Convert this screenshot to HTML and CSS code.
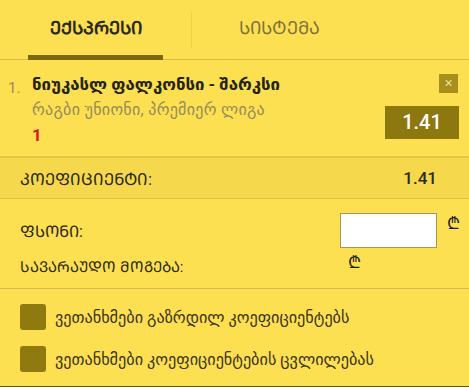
FILE: index.html
```html
<!DOCTYPE html>
<html lang="ka">
<head>
    <meta charset="UTF-8">
    <title>ბილეთი</title>
    <link rel="stylesheet" href="styles.css">
</head>
<body>
    <div class="kupon">
        <div class="tabebi">
            <div class="tabi aktiuri">ᲔᲥᲡᲞᲠᲔᲡᲘ</div>
            <div class="gamyofi"></div>
            <div class="tabi">ᲡᲘᲡᲢᲔᲛᲐ</div>
        </div>

        <div class="movlena">
            <div class="nomeri">1.</div>
            <div class="info">
                <div class="satauri">ნიუკასლ ფალკონსი - შარკსი</div>
                <div class="liga">რაგბი უნიონი, პრემიერ ლიგა</div>
                <div class="shedegi">1</div>
            </div>
            <div class="marjvena">
                <button class="dakhurva">×</button>
                <div class="koef-yuti">1.41</div>
            </div>
        </div>

        <div class="koef-rigi">
            <span class="etiketi">ᲙᲝᲔᲤᲘᲪᲘᲔᲜᲢᲘ:</span>
            <span class="koef-mnishvneloba">1.41</span>
        </div>

        <div class="fsoni">
            <div class="fsoni-rigi">
                <span class="etiketi">ᲤᲡᲝᲜᲘ:</span>
                <input type="text" class="tankha">
                <span class="lari">₾</span>
            </div>
            <div class="mogeba-rigi">
                <span class="etiketi">ᲡᲐᲕᲐᲠᲐᲣᲓᲝ ᲛᲝᲒᲔᲑᲐ:</span>
                <span class="lari">₾</span>
            </div>
        </div>

        <div class="tankhmoba">
            <label class="monishvna"><span class="yuti"></span>ვეთანხმები გაზრდილ კოეფიციენტებს</label>
            <label class="monishvna"><span class="yuti"></span>ვეთანხმები კოეფიციენტების ცვლილებას</label>
        </div>
    </div>
</body>
</html>
```

FILE: styles.css
```css
body {
    margin: 0;
    font-family: Roboto, "DejaVu Sans", sans-serif;
    background-color: #fddf52;
}
.kupon {
    width: 469px;
    height: 387px;
    background-color: #fddf52;
    color: #2b2a1c;
    border-bottom: 1px solid #55503a;
    box-sizing: border-box;
}
.tabebi {
    display: flex;
    align-items: center;
    height: 60px;
    border-bottom: 1px solid #d8bd42;
    box-sizing: border-box;
}
.tabi {
    position: relative;
    height: 100%;
    display: flex;
    align-items: center;
    justify-content: center;
    padding-bottom: 5px;
    box-sizing: border-box;
    font-size: 18px;
    color: #7f7238;
}
.tabi:first-child {
    width: 135px;
    margin-left: 28px;
}
.tabi:last-child {
    width: 150px;
    margin-left: 12px;
}
.aktiuri {
    color: #2b2a1c;
    font-weight: bold;
}
.aktiuri::after {
    content: "";
    position: absolute;
    left: 0;
    right: 0;
    bottom: -1px;
    height: 5px;
    background-color: #7a6910;
}
.gamyofi {
    width: 1px;
    height: 36px;
    margin-left: 28px;
    background-color: #ebcf4c;
}
.movlena {
    display: flex;
    height: 98px;
    padding: 14px 10px 0 8px;
    box-sizing: border-box;
    border-bottom: 2px solid #e3c646;
}
.nomeri {
    width: 24px;
    color: #958b58;
    font-size: 15px;
    padding-top: 5px;
}
.info {
    flex: 1;
}
.satauri {
    font-size: 16.8px;
    font-weight: bold;
    color: #25241a;
}
.liga {
    margin-top: 6px;
    font-size: 16px;
    letter-spacing: 0.3px;
    color: #958b58;
}
.shedegi {
    margin-top: 6px;
    font-size: 17px;
    font-weight: bold;
    color: #d61c1c;
}
.marjvena {
    display: flex;
    flex-direction: column;
    align-items: flex-end;
}
.dakhurva {
    width: 19px;
    height: 19px;
    padding: 0;
    border: none;
    background-color: #a88f1c;
    color: #f0e0a0;
    font-size: 14px;
    line-height: 19px;
    margin-right: 1px;
}
.koef-yuti {
    margin-top: 13px;
    width: 74px;
    height: 33px;
    line-height: 33px;
    text-align: center;
    background-color: #8d7810;
    color: #fff;
    font-size: 20px;
    font-weight: 500;
}
.koef-rigi {
    display: flex;
    justify-content: space-between;
    align-items: center;
    height: 40px;
    padding: 0 32px 0 20px;
    background-color: #f6d84d;
    border-bottom: 1px solid #dcc046;
}
.koef-rigi .etiketi {
    font-size: 16.5px;
}
.koef-mnishvneloba {
    font-weight: 500;
    font-size: 17px;
}
.fsoni {
    padding: 14px 0 0 20px;
    height: 90px;
    box-sizing: border-box;
    border-bottom: 1px solid #d8bd42;
}
.fsoni-rigi {
    display: flex;
    align-items: center;
}
.etiketi {
    font-size: 16px;
}
.fsoni-rigi .etiketi {
    flex: 1;
}
.tankha {
    width: 97px;
    height: 35px;
    box-sizing: border-box;
    border: 1px solid #a89858;
    background: #fff;
}
.lari {
    font-family: "DejaVu Sans", sans-serif;
    font-size: 17px;
    color: #1e1d14;
}
.fsoni-rigi .lari {
    width: 32px;
    text-align: center;
    margin-top: -16px;
}
.mogeba-rigi {
    display: flex;
    align-items: center;
    margin-top: 8px;
}
.mogeba-rigi .etiketi {
    font-size: 15px;
}
.mogeba-rigi .lari {
    margin-left: 165px;
    margin-top: -10px;
}
.tankhmoba {
    padding: 15px 0 0 20px;
}
.monishvna {
    display: flex;
    align-items: center;
    height: 26px;
    margin-bottom: 16px;
    font-size: 16.2px;
    color: #3a3520;
}
.yuti {
    width: 26px;
    height: 26px;
    margin-right: 9px;
    border-radius: 3px;
    background-color: #8f7a10;
}
```
